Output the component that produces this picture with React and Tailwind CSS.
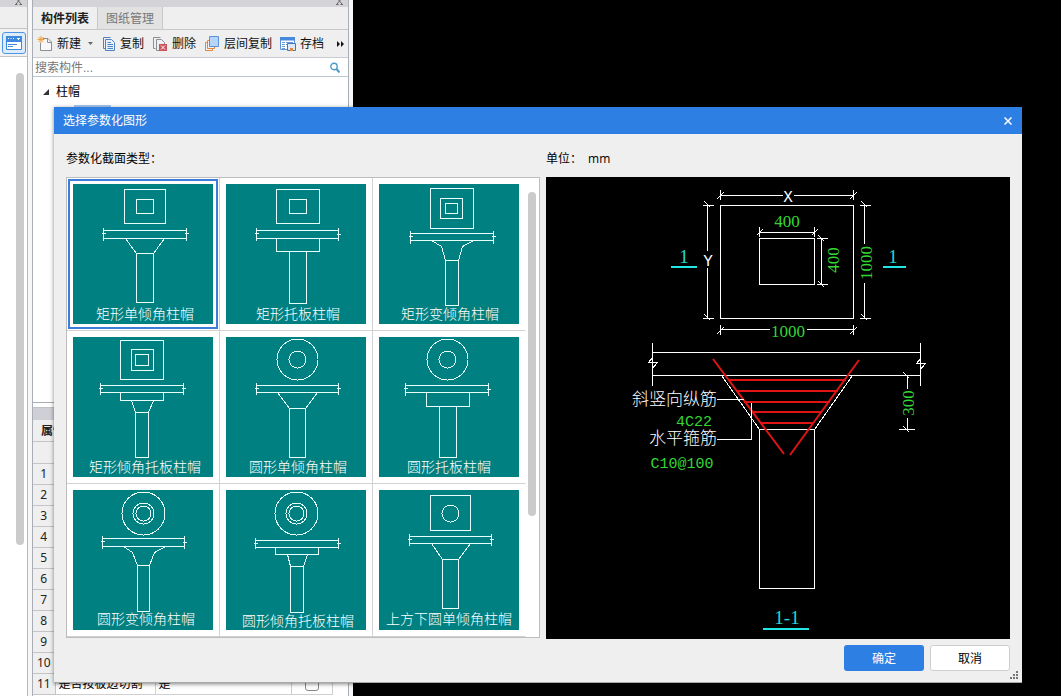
import React, { useState } from 'react';

const shapes = [
  {
    name: '矩形单倾角柱帽',
    textX: 23,
    textY: 135,
    path: 'M51 5H92V39H51Z M63 15H80V29H63Z M30 46H113 M30 54H113 M30 43V56 M113 43V56 M28 49H32 M111 49H115 M52 54L63 69 M91 54L80 69 M63 69H80V118H63Z',
  },
  {
    name: '矩形托板柱帽',
    textX: 30,
    textY: 135,
    path: 'M50 5H93V39H50Z M63 15H80V29H63Z M30 46H112 M30 54H112 M30 43V56 M112 43V56 M28 49H32 M110 50H114 M50 54V67H93V54 M63 67V119H80V67',
  },
  {
    name: '矩形变倾角柱帽',
    textX: 22,
    textY: 135,
    path: 'M51 4H94V44H51Z M61 14H83V34H61Z M66 19H78V29H66Z M31 49H114 M31 56H114 M31 46V59 M114 46V59 M29 52H33 M112 52H116 M52 56L62 62L66 76 M94 56L83 62L79 76 M66 76H79V121H66Z',
  },
  {
    name: '矩形倾角托板柱帽',
    textX: 16,
    textY: 135,
    path: 'M47 3H90V42H47Z M58 12H80V33H58Z M62 17H75V28H62Z M27 48H110 M27 55H110 M27 45V57 M110 45V57 M25 51H29 M108 51H112 M47 55V63H90V55 M58 63L62 75 M80 63L75 75 M62 75H75V120H62Z',
  },
  {
    name: '圆形单倾角柱帽',
    textX: 23,
    textY: 135,
    circles: [[71, 22, 20], [71, 22, 8]],
    path: 'M30 48H112 M30 55H112 M30 45V57 M112 45V57 M28 51H32 M110 51H114 M51 55L63 71 M91 55L79 71 M63 71H79V120H63Z',
  },
  {
    name: '圆形托板柱帽',
    textX: 28,
    textY: 135,
    circles: [[68, 22, 20], [68, 22, 8]],
    path: 'M26 48H109 M26 55H109 M26 45V58 M109 45V58 M24 51H28 M107 52H111 M47 55V69H90V55 M60 69V120H77V69',
  },
  {
    name: '圆形变倾角柱帽',
    textX: 24,
    textY: 134,
    circles: [[70, 23, 21], [70, 23, 10], [70, 23, 7]],
    path: 'M29 48H111 M29 56H111 M29 45V58 M111 45V58 M27 51H31 M109 52H113 M50 56L59 62L64 75 M92 56L81 62L76 75 M64 75H76V121H64Z',
  },
  {
    name: '圆形倾角托板柱帽',
    textX: 16,
    textY: 136,
    circles: [[70, 23, 21], [70, 23, 10], [70, 23, 7]],
    path: 'M29 50H112 M29 57H112 M29 47V58 M112 47V58 M27 53H31 M110 53H114 M49 57V64H92V57 M61 64L64 76 M81 64L77 76 M64 76H77V122H64Z',
  },
  {
    name: '上方下圆单倾角柱帽',
    textX: 7,
    textY: 134,
    circles: [[71, 23, 8]],
    path: 'M51 5H91V40H51Z M30 46H112 M30 53H112 M30 43V55 M112 43V55 M28 49H32 M110 49H114 M52 53L63 69 M91 53L79 69 M63 69H79V118H63Z',
  },
];

const cjk = "font-['Liberation_Sans','Noto_Sans_CJK_SC',sans-serif]";
const rows = [1, 2, 3, 4, 5, 6, 7, 8, 9, 10, 11];

const ShapeThumb = ({ shape, selected, onSelect }) => (
  <li className="border-b border-r border-[#d2d2d2] p-px nth-[3n]:border-r-transparent">
    <button
      type="button"
      aria-pressed={selected}
      onClick={onSelect}
      className={`block border-2 p-[3px] ${selected ? 'border-[#3b7dd8]' : 'border-transparent'}`}
    >
      <svg width="140" height="140" className="block bg-[#008080]">
        <g fill="none" stroke="#e6ffff" shapeRendering="crispEdges" transform="translate(.5 .5)">
          <path d={shape.path} />
          {(shape.circles || []).map(([cx, cy, r]) => (
            <circle key={r} cx={cx} cy={cy} r={r + 0.5} />
          ))}
        </g>
        <text x={shape.textX} y={shape.textY} fill="#fff" className="text-[14px] font-light">
          {shape.name}
        </text>
      </svg>
    </button>
  </li>
);

const SectionDrawing = () => (
  <svg
    width="464"
    height="462"
    className="block font-['Liberation_Serif','Noto_Sans_CJK_SC',serif]"
  >
    <g fill="none" stroke="#fff" shapeRendering="crispEdges" transform="translate(.5 .5)">
      {/* plan */}
      <path d="M174 28H307V141H174Z M213 61H268V107H213Z" />
      <path d="M174 18H236 M247 18H307 M174 12V22 M307 12V22 M170 22L177 15 M303 22L310 15" />
      <path d="M161 28V73 M161 90V141 M156 28H167 M156 141H167 M158 24L164 30 M158 137L164 143" />
      <path d="M318 28V66 M318 105V141 M313 28H324 M313 141H324 M315 24L321 30 M315 137L321 143" />
      <path d="M174 152H223 M260 152H307 M174 147V157 M307 147V157 M170 157L177 150 M303 157L310 150" />
      <path d="M213 55H268 M213 49V59 M268 49V59 M210 58L216 52 M265 58L271 52" />
      <path d="M275 61V107 M270 61H281 M270 107H281 M272 58L278 64 M272 104L278 110" />
      {/* elevation */}
      <path d="M106 175H374 M106 198H374 M106 165V208 M374 165V208" />
      <path d="M106 180L102 185H111L106 191 M374 181L370 186H379L374 192" />
      <path d="M175 198L213 252 M306 198L268 252 M213 252H268V411H213Z" />
      <path d="M361 198V211 M361 240V252 M352 252H368 M357 195L363 201 M357 249L363 255" />
    </g>
    <g fill="none" stroke="#e01414" strokeWidth="2">
      <path d="M167 182L238 277 M313 183L244 278" />
      <path d="M182 203H300 M190 214H292 M198 225H284 M206 235H276 M214 246H268" />
    </g>
    <path
      d="M170.5 222.5H198 M171 262.5H205.5V226"
      fill="none"
      stroke="#fff"
      shapeRendering="crispEdges"
    />
    <path d="M125 90H151 M337 90H360 M217 452H263" stroke="#22e6e6" strokeWidth="2" />
    <g fill="#fff" fontSize="16" className="font-['Liberation_Mono',monospace]">
      <text x="242" y="25" textAnchor="middle">X</text>
      <text x="162" y="89" textAnchor="middle">Y</text>
    </g>
    <g fill="#fff" fontSize="17" fontWeight="300">
      <text x="86" y="228">斜竖向纵筋</text>
      <text x="103" y="267">水平箍筋</text>
    </g>
    <g fill="#33d633" fontSize="17" textAnchor="middle">
      <text x="241" y="50">400</text>
      <text x="242" y="160">1000</text>
      <text transform="translate(293 83) rotate(-90)">400</text>
      <text transform="translate(326 86) rotate(-90)">1000</text>
      <text transform="translate(368 226) rotate(-90)">300</text>
    </g>
    <g
      fill="#33d633"
      fontSize="15"
      textAnchor="middle"
      className="font-['Liberation_Mono',monospace]"
    >
      <text x="148" y="249">4C22</text>
      <text x="136" y="291">C10@100</text>
    </g>
    <g fill="#22d6d6" fontSize="19" textAnchor="middle">
      <text x="138" y="86">1</text>
      <text x="347" y="86">1</text>
      <text x="241" y="447">1-1</text>
    </g>
  </svg>
);

const NewIcon = () => (
  <svg width="16" height="16" fill="none">
    <path d="M6 2.5H11L14.5 6V14.5H3.5V7" fill="#f7f7f7" stroke="#8a8f96" />
    <path d="M10.5 2.5V6.5H14.5" stroke="#8a8f96" />
    <path d="M4 0V7M0.5 3.5H7.5M1.5 1L6.5 6M6.5 1L1.5 6" stroke="#f0a030" />
  </svg>
);

const CopyIcon = () => (
  <svg width="14" height="16" fill="none" stroke="#4f82c2">
    <path d="M3.5 12.5H1.5V1.5H8.5" />
    <path d="M3.5 3.5H9.5L12.5 6.5V14.5H3.5Z" fill="#e8f2fd" />
    <path d="M5.5 6.5H9M5.5 8.5H11M5.5 10.5H11M5.5 12.5H11" />
  </svg>
);

const DeleteIcon = () => (
  <svg width="16" height="16" fill="none">
    <path d="M3.5 12.5H1.5V1.5H8.5" stroke="#8a8f96" />
    <path d="M7 14.5H4.5V3.5H9.5L12.5 6.5V8" stroke="#8a8f96" />
    <path d="M7 8H15V15H7Z" fill="#c9545c" />
    <path d="M9 9.5L13 13.5M13 9.5L9 13.5" stroke="#fff" />
  </svg>
);

const LayerIcon = () => (
  <svg width="16" height="16" fill="none">
    <path d="M3.5 6.5H1.5V14.5H8.5V12" stroke="#e0893a" />
    <path d="M5 4.5H3.5V12.5H10.5V11" stroke="#e0893a" />
    <path d="M5.5 0.5H14.5V10.5H5.5Z" fill="#b5d5fa" stroke="#5b92dc" />
  </svg>
);

const ArchiveIcon = () => (
  <svg width="16" height="16" fill="none">
    <path d="M0.5 1.5H14.5V13.5H0.5Z" fill="#fff" stroke="#5b92dc" />
    <path d="M0 1H15V4.5H0Z" fill="#4688dd" />
    <path d="M2 6.5H5M6 6.5H13M2 8.5H5M6 8.5H8M2 10.5H5M2 12.5H5" stroke="#6d9bd8" />
    <path d="M7.5 7.5H15.5V14.5H7.5Z" fill="#dbe9fb" stroke="#4276b8" />
    <path d="M10 12H13V15H10Z" fill="#e0893a" />
  </svg>
);

const SmallX = () => (
  <svg width="7" height="6" stroke="#666" fill="none">
    <path d="M1 -2L6 4M6 -2L1 4M0 4.500H2.500M4.500 4.500H7" />
  </svg>
);

const LeftStrip = () => (
  <aside className="flex w-[28px] shrink-0 flex-col border-r border-[#b8b8bc] bg-white">
    <div className="flex h-[7px] justify-end bg-[#d3d3d8] pr-[5px]">
      <SmallX />
    </div>
    <div className="h-[22px] border-b border-[#c4c4c8] bg-[#efefef]" />
    <div className="flex h-[28px] items-center justify-center border-b border-[#c4c4c8] bg-[#f2f2f2]">
      <button
        type="button"
        aria-label="属性"
        className="flex h-[22px] w-6 items-center justify-center rounded-[3px] border border-[#4b94e6] bg-[#dcecfc]"
      >
        <svg width="16" height="14" fill="none">
          <path d="M0.500 0.500H15.500V13.500H0.500Z" fill="#fff" stroke="#3f88e0" />
          <path d="M0 0H16V6H0Z" fill="#3f88e0" />
          <path d="M2 2.500H3M4.500 2.500H5.500M7 2.500H8M11 2.500H14M12 3.500H13" stroke="#fff" />
          <path d="M2 8.500H11M2 10.500H7" stroke="#3f88e0" />
        </svg>
      </button>
    </div>
    <div className="mt-4 mr-[3px] h-[472px] w-2 self-end rounded-full bg-[#cbcbcb]" />
  </aside>
);

const ComponentPanel = () => (
  <section className="ml-1 w-[317px] shrink-0 border-x border-[#a9adb5] bg-white">
    <div className="flex h-[7px] justify-end bg-[#d3d3d8] pr-[5px]">
      <SmallX />
    </div>
    <div className="flex h-[23px] border-b border-[#c8c8c8] bg-[#efefef]">
      <button type="button" className="w-[65px] border-r border-[#c8c8c8] pt-0.5 font-bold text-[#222]">
        构件列表
      </button>
      <button type="button" className="w-[65px] border-r border-[#c8c8c8] bg-[#e2e2e2] pt-0.5 text-[#777]">
        图纸管理
      </button>
    </div>
    <div className="flex h-7 items-center gap-2 border-b border-[#c8ccd2] bg-[#efefef] pt-px pl-1 whitespace-nowrap text-[#111]">
      <button type="button" className="flex items-center gap-1">
        <NewIcon />
        新建
        <svg width="9" height="4" fill="#666">
          <path d="M3 0H8L5.500 3Z" />
        </svg>
      </button>
      <button type="button" className="flex items-center gap-1">
        <CopyIcon />
        复制
      </button>
      <button type="button" className="flex items-center gap-1">
        <DeleteIcon />
        删除
      </button>
      <button type="button" className="flex items-center gap-1">
        <LayerIcon />
        层间复制
      </button>
      <button type="button" className="flex items-center gap-1">
        <ArchiveIcon />
        存档
      </button>
      <button type="button" aria-label="更多" className="mr-[3px] ml-auto">
        <svg width="8" height="6" fill="#111" className="block">
          <path d="M0 0L3 3L0 6ZM4 0L7 3L4 6Z" />
        </svg>
      </button>
    </div>
    <div className="flex h-[19px] items-center border-b border-[#b9c7d4] pr-2 pl-0.5">
      <input
        type="text"
        aria-label="搜索构件"
        placeholder="搜索构件..."
        className="min-w-0 flex-1 pt-0.5 placeholder:text-[#777] focus:outline-none"
      />
      <svg width="10" height="11" fill="none" stroke="#4f9bc8">
        <circle cx="4" cy="4.500" r="3.200" strokeWidth="1.400" />
        <path d="M6.500 7L9.500 10.500" strokeWidth="2" />
      </svg>
    </div>
    <div className="h-[326px] border-b border-[#a9adb5] pt-[5px] pl-[10px]">
      <div className="flex h-5 items-center gap-[7px] text-black">
        <svg width="6" height="6" fill="#333">
          <path d="M6 0V6H0Z" />
        </svg>
        柱帽
      </div>
      <div className="ml-[31px] mt-[3px] h-4 w-[37px] bg-[#a9c8ee]" />
    </div>
    <div className="mt-1 h-[13px] border-t border-[#c0c0c6] bg-[#cfcfd6]" />
    <div className="h-[22px] border-b border-[#c4c4c8] bg-[#efefef] pl-2 leading-[22px] font-bold text-[#222]">
      属性列表
    </div>
    <table className="w-[300px] table-fixed border-collapse text-black">
      <thead>
        <tr className="h-[21px]">
          <th className="w-[22px] border-b border-[#c4c4c8] bg-[#efefef]" />
          <th className="w-[100px]" />
          <th className="w-[136px]" />
          <th />
        </tr>
      </thead>
      <tbody>
        {rows.map((n) => (
          <tr key={n} className="h-[21px]">
            <td className="border border-l-0 border-[#c4c4c8] bg-[#efefef] p-0 text-center font-['Noto_Sans'] text-[#222]">
              {n}
            </td>
            <td className="border border-[#d0d0d0] p-0 pl-[3px] leading-5 whitespace-nowrap">
              {n === 11 && '是否按板边切割'}
            </td>
            <td className="border border-[#d0d0d0] p-0 pl-[3px] leading-5">{n === 11 && '是'}</td>
            <td className="border border-[#d0d0d0] p-0 text-center">
              {n === 11 && (
                <input
                  type="checkbox"
                  aria-label="是否按板边切割"
                  className="mx-auto block size-[14px] appearance-none rounded-[3px] border border-[#888] bg-white"
                />
              )}
            </td>
          </tr>
        ))}
      </tbody>
    </table>
  </section>
);

const ShapeDialog = () => {
  const [selected, setSelected] = useState(0);

  return (
    <div
      role="dialog"
      aria-labelledby="dialog-title"
      className="absolute top-[107px] right-[39px] left-[54px] border-b border-[#a8a8a8] bg-[#efefef] shadow-[0_1px_4px_rgba(0,0,0,0.5)]"
    >
      <header className="flex h-[27px] items-center justify-between bg-[#2d7fe3] pr-[10px] pl-[9px] text-white">
        <h1 id="dialog-title">选择参数化图形</h1>
        <button type="button" aria-label="关闭">
          <svg width="8" height="8" stroke="#fff" strokeWidth="1.500" className="block">
            <path d="M0.500 0.500L7.500 7.500M7.500 0.500L0.500 7.500" />
          </svg>
        </button>
      </header>
      <div className="flex gap-1.5 px-3 text-black">
        <div className="w-[474px] shrink-0">
          <h2 className="pt-4 pb-[9px] leading-[18px]">参数化截面类型：</h2>
          <div className="flex justify-between border border-[#bdbdbd] bg-white pr-[3px]">
            <ul className="grid grid-cols-[153px_153px_153px]">
              {shapes.map((shape, i) => (
                <ShapeThumb
                  key={shape.name}
                  shape={shape}
                  selected={selected === i}
                  onSelect={() => setSelected(i)}
                />
              ))}
            </ul>
            <div className="mt-[14px] h-[324px] w-2 rounded-full bg-[#cbcbcb]" />
          </div>
        </div>
        <div className="min-w-0 flex-1">
          <p className="flex gap-1.5 pt-4 pb-[9px] leading-[18px]">
            单位：
            <span className="font-['Open_Sans'] text-[12px]">mm</span>
          </p>
          <div className="overflow-hidden bg-black">
            <SectionDrawing />
          </div>
        </div>
      </div>
      <footer className="flex justify-end gap-1.5 px-3 pt-1.5 pb-[11px]">
        <button
          type="button"
          className="h-[26px] w-20 rounded-[3px] bg-[#2d7fe3] pt-0.5 text-white"
        >
          确定
        </button>
        <button
          type="button"
          className="h-[26px] w-20 rounded-[3px] border border-[#cfcfcf] bg-white pt-0.5 text-black"
        >
          取消
        </button>
      </footer>
      <svg width="8" height="8" fill="#777" className="absolute right-1 bottom-[3px]">
        <path d="M6 0h2v2h-2zM3 3h2v2h-2zM6 3h2v2h-2zM0 6h2v2h-2zM3 6h2v2h-2zM6 6h2v2h-2z" />
      </svg>
    </div>
  );
};

const App = () => (
  <main className={`relative flex h-screen overflow-hidden bg-black text-[12px] ${cjk}`}>
    <div className="flex bg-[#f7f7f7] pr-1">
      <LeftStrip />
      <ComponentPanel />
    </div>
    <ShapeDialog />
  </main>
);

export default App;
